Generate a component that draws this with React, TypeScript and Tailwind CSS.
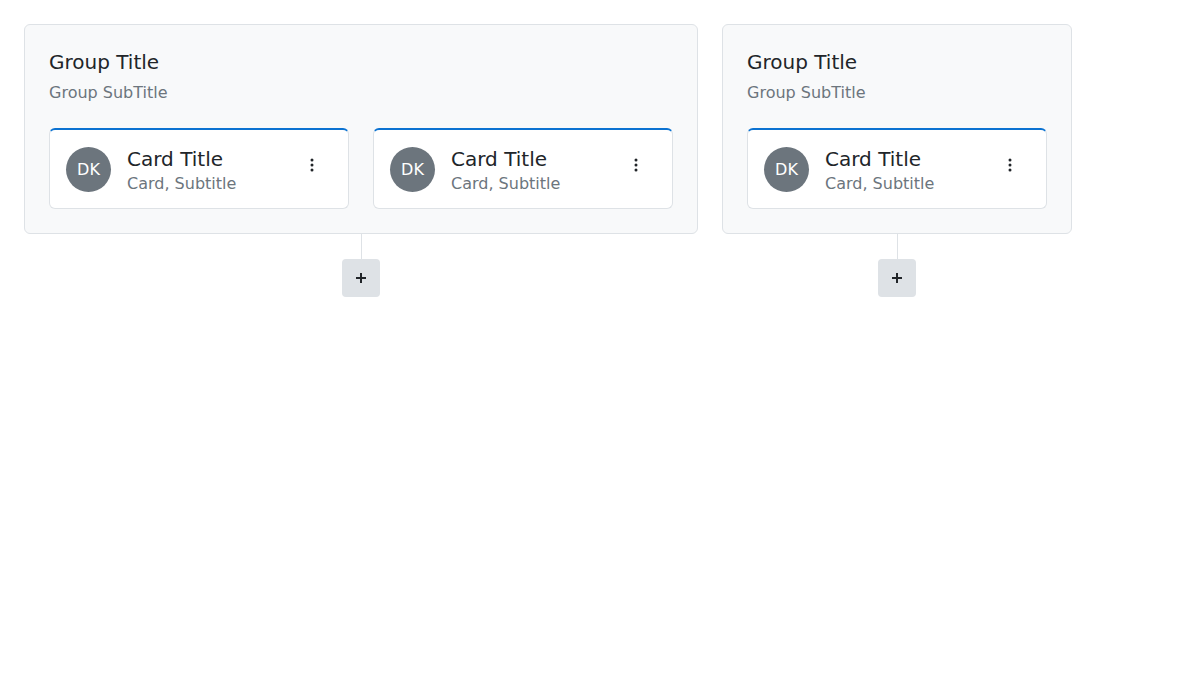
import React from 'react';

const font = { fontFamily: '"DejaVu Sans", sans-serif' };

const Kebab = () => (
  <svg width="16" height="16" viewBox="0 0 16 16" fill="#212529">
    <circle cx="8" cy="3" r="1.5" />
    <circle cx="8" cy="8" r="1.5" />
    <circle cx="8" cy="13" r="1.5" />
  </svg>
);

const Card = () => (
  <div className="w-[300px] bg-white border border-[#dee2e6] border-t-2 border-t-[#0b72d1] rounded-[6px] p-4 flex items-start gap-4">
    <div className="w-[45px] h-[45px] mt-[1px] rounded-full bg-[#6c757d] text-white flex items-center justify-center text-[16px] shrink-0">
      DK
    </div>
    <div className="flex-1 min-w-0 mt-[1px] h-[45px]">
      <div className="text-[20px] leading-[24px] text-[#212529]">Card Title</div>
      <div className="text-[16px] leading-[19px] mt-[3px] text-[#6c757d]">Card, Subtitle</div>
    </div>
    <button className="mt-[11px] mr-[12px] w-4 h-4 flex items-center justify-center">
      <Kebab />
    </button>
  </div>
);

const Group = ({ cards }: { cards: number }) => (
  <div className="flex flex-col items-center">
    <div className="bg-[#f8f9fa] border border-[#dee2e6] rounded-[6px] p-6">
      <div className="text-[20px] leading-[26px] text-[#212529]">Group Title</div>
      <div className="text-[16px] leading-[24px] text-[#6c757d] mt-[6px]">Group SubTitle</div>
      <div className="flex gap-6 mt-[23px]">
        {Array.from({ length: cards }).map((_, i) => (
          <Card key={i} />
        ))}
      </div>
    </div>
    <div className="w-px h-[25px] bg-[#dee2e6]" />
    <button className="w-[38px] h-[38px] rounded-[4px] bg-[#dee2e6] flex items-center justify-center">
      <svg width="12" height="12" viewBox="0 0 12 12" stroke="#212529" strokeWidth="2">
        <line x1="6" y1="1" x2="6" y2="11" />
        <line x1="1" y1="6" x2="11" y2="6" />
      </svg>
    </button>
  </div>
);

const App = () => {
  return (
    <div className="min-h-[682px] bg-white p-6 flex items-start gap-6" style={font}>
      <Group cards={2} />
      <Group cards={1} />
    </div>
  );
};

export default App;
